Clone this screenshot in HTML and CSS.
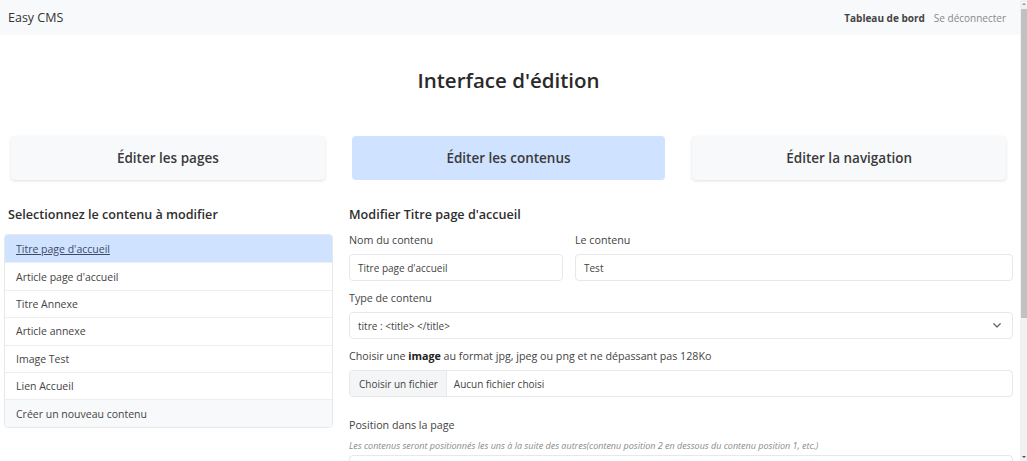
FILE: index.html
```html
<!DOCTYPE html>
<html lang="fr">
<head>
<meta charset="utf-8">
<title>Easy CMS</title>
<link rel="stylesheet" href="styles.css">
</head>
<body>
<nav class="navbar">
  <span class="brand">Easy CMS</span>
  <div class="nav-links">
    <a class="nav-link active" href="#">Tableau de bord</a>
    <a class="nav-link" href="#">Se déconnecter</a>
  </div>
</nav>
<main class="page">
  <h1 class="page-title">Interface d'édition</h1>
  <div class="tabs">
    <a class="tab" href="#">Éditer les pages</a>
    <a class="tab tab-active" href="#">Éditer les contenus</a>
    <a class="tab" href="#">Éditer la navigation</a>
  </div>
  <div class="editor">
    <section class="sidebar">
      <h2 class="section-title sidebar-title">Selectionnez le contenu à modifier</h2>
      <ul class="list-group">
        <li class="list-item list-item-active"><a href="#">Titre page d'accueil</a></li>
        <li class="list-item">Article page d'accueil</li>
        <li class="list-item">Titre Annexe</li>
        <li class="list-item">Article annexe</li>
        <li class="list-item">Image Test</li>
        <li class="list-item">Lien Accueil</li>
        <li class="list-item list-item-new">Créer un nouveau contenu</li>
      </ul>
    </section>
    <section class="form">
      <h2 class="section-title">Modifier Titre page d'accueil</h2>
      <div class="row-2">
        <div class="field">
          <label class="label">Nom du contenu</label>
          <div class="input">Titre page d'accueil</div>
        </div>
        <div class="field">
          <label class="label">Le contenu</label>
          <div class="input">Test</div>
        </div>
      </div>
      <div class="field">
        <label class="label">Type de contenu</label>
        <div class="input select">
          <span>titre : &lt;title&gt; &lt;/title&gt;</span>
          <svg class="chevron" width="10" height="7" viewBox="0 0 10 7"><path d="M1.8 1.8 L5 5 L8.2 1.8" fill="none" stroke="#666" stroke-width="1.3" stroke-linecap="round" stroke-linejoin="round"/></svg>
        </div>
      </div>
      <div class="field">
        <label class="label">Choisir une <b>image</b> au format jpg, jpeg ou png et ne dépassant pas 128Ko</label>
        <div class="input file">
          <span class="file-btn">Choisir un fichier</span>
          <span class="file-name">Aucun fichier choisi</span>
        </div>
      </div>
      <div class="field field-position">
        <label class="label">Position dans la page</label>
        <p class="hint">Les contenus seront positionnés les uns à la suite des autres(contenu position 2 en dessous du contenu position 1, etc.)</p>
        <div class="input"></div>
      </div>
    </section>
  </div>
</main>
<div class="scrollbar" aria-hidden="true">
  <span class="scroll-arrow scroll-up"></span>
  <span class="scroll-thumb"></span>
  <span class="scroll-arrow scroll-down"></span>
</div>
</body>
</html>
```
FILE: styles.css
```css
html::-webkit-scrollbar {
  display: none;
}
* {
  box-sizing: border-box;
}
body {
  margin: 0 7px 0 0;
  font-family: "Open Sans", "Noto Sans", sans-serif;
  color: #333;
  background: #fff;
}
a {
  color: inherit;
  text-decoration: none;
}
.navbar {
  height: 35px;
  background: #f8f9fa;
  display: flex;
  align-items: center;
  justify-content: space-between;
  padding: 0 14px 0 8px;
}
.brand {
  font-size: 12.5px;
  color: #333;
}
.nav-links {
  display: flex;
  gap: 9px;
  font-size: 10px;
}
.nav-link {
  color: #8a8a8a;
}
.nav-link.active {
  color: #444;
  font-weight: 700;
}
.page {
  padding: 0 7px 200px 4px;
}
.page-title {
  margin: 33px 0 0;
  text-align: center;
  font-size: 20.5px;
  font-weight: 600;
  line-height: 25px;
  color: #2a2a2a;
}
.tabs {
  display: grid;
  grid-template-columns: repeat(3, 1fr);
  gap: 27px;
  margin: 43px 7px 0 7px;
}
.tab {
  height: 44px;
  display: flex;
  align-items: center;
  justify-content: center;
  background: #f8f9fa;
  border-radius: 4px;
  box-shadow: 0 1px 3px rgba(0, 0, 0, 0.12);
  font-size: 13.5px;
  font-weight: 600;
  color: #3a3a3a;
}
.tab-active {
  background: #cfe2ff;
  box-shadow: none;
}
.editor {
  display: grid;
  grid-template-columns: 329px 1fr;
  gap: 16px;
  margin-top: 26px;
}
.section-title {
  margin: 0;
  font-size: 12.6px;
  font-weight: 600;
  line-height: 17px;
  color: #2e2e2e;
}
.sidebar-title {
  padding-left: 4px;
}
.list-group {
  list-style: none;
  margin: 11px 0 0;
  padding: 0;
  border: 1px solid #e6e8ea;
  border-radius: 4px;
  overflow: hidden;
}
.list-item {
  height: 27.4px;
  display: flex;
  align-items: center;
  padding-left: 11px;
  font-size: 10.5px;
  color: #444;
  border-top: 1px solid #eceeef;
}
.list-item:first-child {
  border-top: none;
}
.list-item-active {
  background: #cfe2ff;
}
.list-item-active a {
  color: #3d4a66;
  text-decoration: underline;
}
.list-item-new {
  background: #f8f9fa;
}
.form {
  display: flex;
  flex-direction: column;
}
.row-2 {
  display: grid;
  grid-template-columns: 214px 1fr;
  gap: 12px;
}
.field {
  display: flex;
  flex-direction: column;
}
.label {
  font-size: 10.7px;
  line-height: 14px;
  color: #444;
  margin: 10px 0 7px;
}
.label b {
  color: #222;
}
.input {
  height: 27px;
  border: 1px solid #e6e8ea;
  border-radius: 4px;
  display: flex;
  align-items: center;
  padding-left: 8px;
  font-size: 10px;
  color: #444;
}
.select {
  justify-content: space-between;
  padding-right: 10px;
}
.file {
  padding-left: 0;
  overflow: hidden;
}
.file-btn {
  height: 100%;
  display: flex;
  align-items: center;
  padding: 0 8px 0 9px;
  background: #f4f5f6;
  border-right: 1px solid #e6e8ea;
}
.file-name {
  padding-left: 7px;
}
.field-position .label {
  margin-top: 21px;
  margin-bottom: 8px;
}
.hint {
  margin: 0 0 3px;
  font-size: 9px;
  line-height: 12px;
  font-style: italic;
  color: #8a8a8a;
}
.scrollbar {
  position: fixed;
  top: 0;
  right: 0;
  width: 7px;
  height: 100%;
  background: #f1f1f1;
  display: flex;
  flex-direction: column;
  align-items: center;
}
.scroll-arrow {
  width: 0;
  height: 0;
  border-left: 2px solid transparent;
  border-right: 2px solid transparent;
  margin: 3px 0;
}
.scroll-up {
  border-bottom: 2px solid #9a9a9a;
}
.scroll-down {
  border-top: 2px solid #505050;
  margin-top: auto;
}
.scroll-thumb {
  width: 6px;
  height: 309px;
  background: #c1c1c1;
  margin-top: 1px;
}
```
